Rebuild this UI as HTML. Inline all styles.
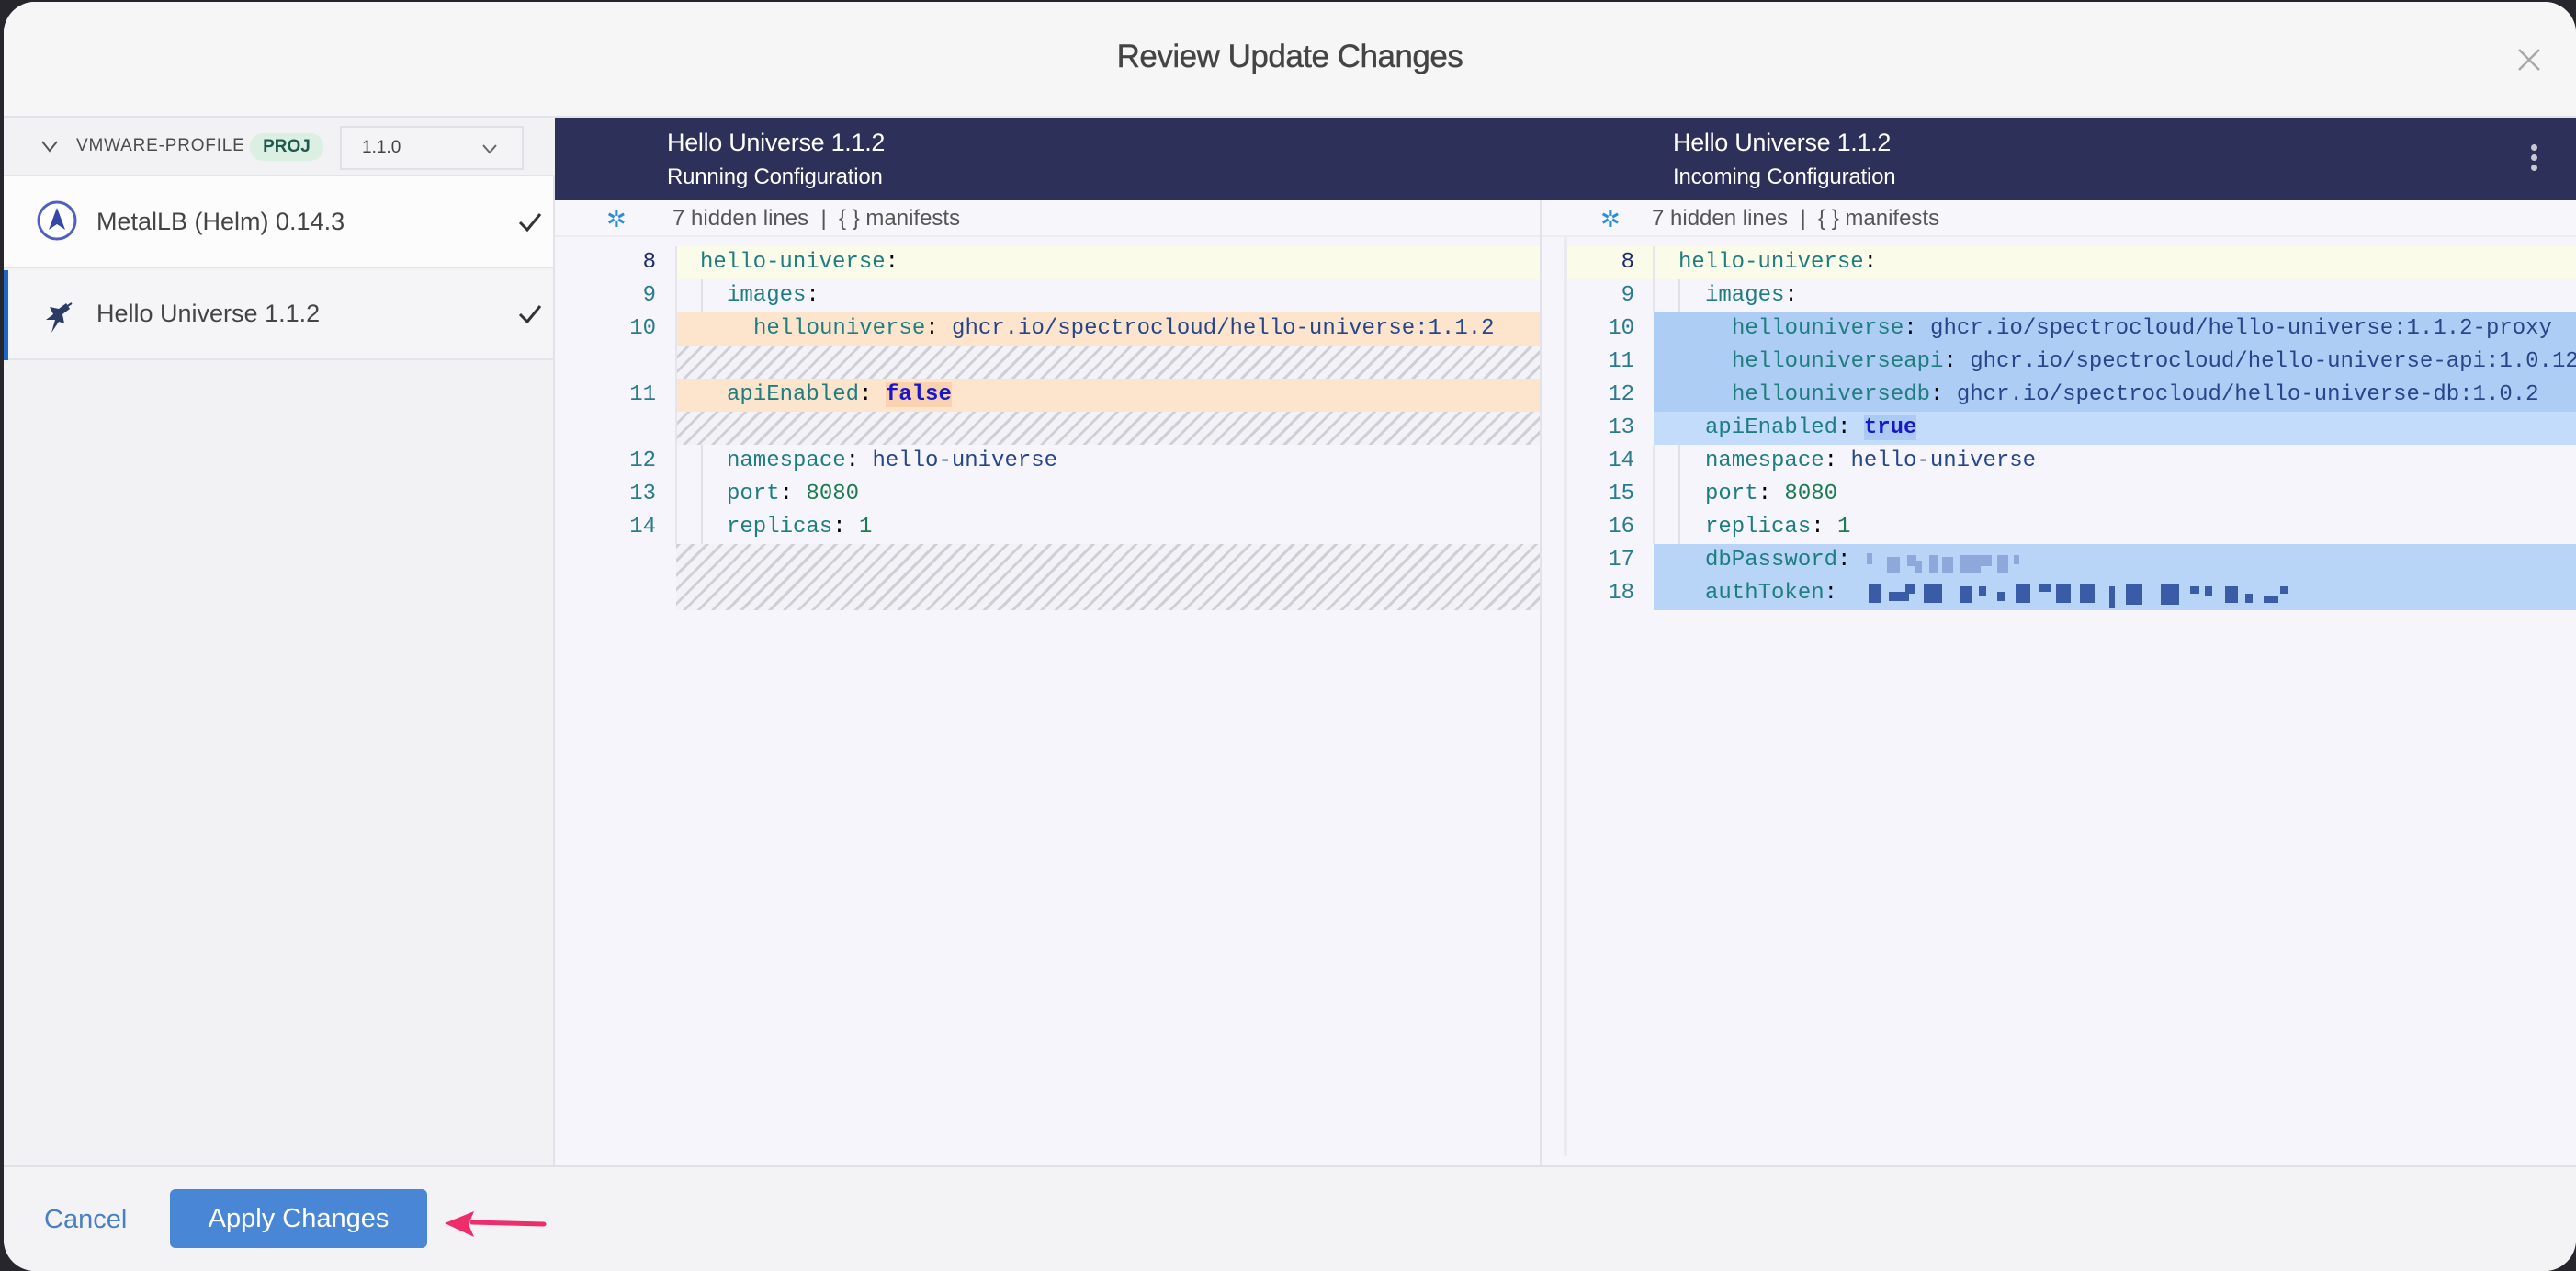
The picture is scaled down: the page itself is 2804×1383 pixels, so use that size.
<!DOCTYPE html>
<html><head><meta charset="utf-8"><style>
*{margin:0;padding:0;box-sizing:border-box}
body{width:2804px;height:1383px;background:#26262c;position:relative;overflow:hidden;font-family:"Liberation Sans",sans-serif}
.win{position:absolute;left:4px;top:2px;width:2800px;height:1381px;background:#f6f6f9;border-radius:34px 34px 34px 34px;overflow:hidden}
.a{position:absolute}
.mono{font-family:"Liberation Mono",monospace;font-size:24px;line-height:36px;white-space:pre}
.k{color:#1f7d80}.v{color:#27468a}.n{color:#1f7a52}.b{color:#1a17c9;font-weight:bold}
.ln{position:absolute;text-align:right;color:#2b7b8e;font-family:"Liberation Mono",monospace;font-size:24px;line-height:36px}
.hatch{background:repeating-linear-gradient(-45deg,#f3f2f7 0 8px,#cfcfd8 8px 11px)}
</style></head><body>
<div class="win">
<!-- header -->
<div class="a" style="left:0;top:0;width:2800px;height:126px;background:#f6f6f6;border-bottom:2px solid #e2e3ea"></div>
<div class="a" style="left:0;top:40px;width:2800px;text-align:center;font-size:35px;color:#444;letter-spacing:-0.5px;-webkit-text-stroke:0.4px #444">Review Update Changes</div>
<svg class="a" style="left:2736px;top:50px" width="26" height="26"><path d="M2 2L24 24M24 2L2 24" stroke="#a8a8a8" stroke-width="2.5"/></svg>

<!-- sidebar -->
<div class="a" style="left:0;top:126px;width:600px;height:1140px;background:#f2f2f5;border-right:2px solid #e2e2e8"></div>
<div class="a" style="left:0;top:126px;width:600px;height:64px;background:#f2f2f4;border-bottom:2px solid #e4e4ea"></div>
<svg class="a" style="left:40px;top:150px" width="20" height="14"><path d="M2 2L10 12L18 2" stroke="#555" stroke-width="2" fill="none"/></svg>
<div class="a" style="left:79px;top:146px;font-size:19px;color:#4c4c4c;letter-spacing:0.8px">VMWARE-PROFILE</div>
<div class="a" style="left:268px;top:143px;width:80px;height:30px;border-radius:14px;background:#dbf0e3;color:#1f5a4e;font-size:19px;font-weight:bold;text-align:center;line-height:30px">PROJ</div>
<div class="a" style="left:366px;top:135px;width:200px;height:48px;border:2px solid #e0e0e6;background:#f4f4f6"></div>
<div class="a" style="left:390px;top:148px;font-size:19px;color:#444">1.1.0</div>
<svg class="a" style="left:520px;top:154px" width="18" height="12"><path d="M2 2L9 10L16 2" stroke="#666" stroke-width="2" fill="none"/></svg>

<div class="a" style="left:0;top:190px;width:598px;height:100px;background:#fcfcfd;border-bottom:2px solid #e4e4ea"></div>
<svg class="a" style="left:34px;top:214px" width="48" height="52"><circle cx="24" cy="24" r="20" fill="#fff" stroke="#4f5fc4" stroke-width="3"/><path d="M24 10L33 34L24 28L15 34Z" fill="#3347a8"/></svg>
<div class="a" style="left:101px;top:224px;font-size:27px;color:#444">MetalLB (Helm) 0.14.3</div>
<svg class="a" style="left:559px;top:228px" width="28" height="24"><path d="M3 12L11 20L25 3" stroke="#333" stroke-width="3" fill="none"/></svg>

<div class="a" style="left:0;top:292px;width:598px;height:98px;background:#f5f5f8;border-bottom:2px solid #e4e4ea"></div>
<div class="a" style="left:0;top:292px;width:5px;height:98px;background:#1d67c9"></div>
<svg class="a" style="left:38px;top:324px" width="40" height="42"><path d="M30 4L22 10L12 8L16 16L8 22L18 22L14 36L22 24L28 26L26 16L34 10Z" fill="#2c3a66"/><path d="M24 12L36 4" stroke="#2c3a66" stroke-width="2"/></svg>
<div class="a" style="left:101px;top:324px;font-size:27px;color:#444">Hello Universe 1.1.2</div>
<svg class="a" style="left:559px;top:328px" width="28" height="24"><path d="M3 12L11 20L25 3" stroke="#333" stroke-width="3" fill="none"/></svg>

<!-- editor bg -->
<div class="a" style="left:600px;top:126px;width:2200px;height:1140px;background:#f6f5fb"></div>
<div class="a" style="left:600px;top:126px;width:2200px;height:90px;background:#2d3058"></div>
<div class="a" style="left:722px;top:138px;font-size:27px;color:#fff;letter-spacing:-0.3px">Hello Universe 1.1.2</div>
<div class="a" style="left:722px;top:177px;font-size:24px;color:#fff;letter-spacing:-0.2px">Running Configuration</div>
<div class="a" style="left:1817px;top:138px;font-size:27px;color:#fff;letter-spacing:-0.3px">Hello Universe 1.1.2</div>
<div class="a" style="left:1817px;top:177px;font-size:24px;color:#fff;letter-spacing:-0.2px">Incoming Configuration</div>
<div class="a" style="left:2751px;top:155px;width:7px;height:7px;border-radius:4px;background:#c8c8d0;box-shadow:0 11px 0 #c8c8d0,0 22px 0 #c8c8d0"></div>

<!-- hidden lines rows -->
<div class="a" style="left:600px;top:216px;width:2200px;height:40px;background:#f6f6fb;border-bottom:2px solid #ebebf0"></div>
<div class="a" style="left:656px;top:216px;font-size:26px;color:#2a8fd6;line-height:40px">✲</div>
<div class="a" style="left:728px;top:216px;font-size:24px;color:#555;line-height:40px">7 hidden lines &nbsp;|&nbsp; { } manifests</div>
<div class="a" style="left:1738px;top:216px;font-size:26px;color:#2a8fd6;line-height:40px">✲</div>
<div class="a" style="left:1794px;top:216px;font-size:24px;color:#555;line-height:40px">7 hidden lines &nbsp;|&nbsp; { } manifests</div>

<!-- divider -->
<div class="a" style="left:1672px;top:216px;width:3px;height:1050px;background:#e3e2ea"></div>
<div class="a" style="left:1698px;top:256px;width:4px;height:1000px;background:#ebeaf1"></div>

<!-- left code -->
<div class="a" style="left:732px;top:266px;width:940px;height:36px;background:#fbfbe9"></div>
<div class="a" style="left:732px;top:338px;width:940px;height:36px;background:#fde4cd"></div>
<div class="a hatch" style="left:732px;top:374px;width:940px;height:36px"></div>
<div class="a" style="left:732px;top:410px;width:940px;height:36px;background:#fde4cd"></div>
<div class="a hatch" style="left:732px;top:446px;width:940px;height:36px"></div>
<div class="a hatch" style="left:732px;top:590px;width:940px;height:72px"></div>
<div class="a" style="left:731px;top:266px;width:2px;height:324px;background:#e6e6ea"></div>
<div class="a" style="left:759px;top:302px;width:2px;height:36px;background:#e0e0e6"></div>
<div class="a" style="left:759px;top:482px;width:2px;height:108px;background:#e0e0e6"></div>
<div class="ln" style="left:660px;top:266px;width:50px;color:#1e2c6e">8</div>
<div class="ln" style="left:660px;top:302px;width:50px">9</div>
<div class="ln" style="left:660px;top:338px;width:50px">10</div>
<div class="ln" style="left:660px;top:410px;width:50px">11</div>
<div class="ln" style="left:660px;top:482px;width:50px">12</div>
<div class="ln" style="left:660px;top:518px;width:50px">13</div>
<div class="ln" style="left:660px;top:554px;width:50px">14</div>
<div class="a mono" style="left:758px;top:266px"><span class="k">hello-universe</span>:</div>
<div class="a mono" style="left:787px;top:302px"><span class="k">images</span>:</div>
<div class="a mono" style="left:816px;top:338px"><span class="k">hellouniverse</span>: <span class="v">ghcr.io/spectrocloud/hello-universe:1.1.2</span></div>
<div class="a mono" style="left:787px;top:410px"><span class="k">apiEnabled</span>: <span class="b" style="background:#fbd2b0">false</span></div>
<div class="a mono" style="left:787px;top:482px"><span class="k">namespace</span>: <span class="v">hello-universe</span></div>
<div class="a mono" style="left:787px;top:518px"><span class="k">port</span>: <span class="n">8080</span></div>
<div class="a mono" style="left:787px;top:554px"><span class="k">replicas</span>: <span class="n">1</span></div>

<!-- right code -->
<div class="a" style="left:1702px;top:266px;width:1098px;height:36px;background:#fbfbe9"></div>
<div class="a" style="left:1796px;top:338px;width:1004px;height:108px;background:#aecdf5"></div>
<div class="a" style="left:1796px;top:446px;width:1004px;height:36px;background:#c3dcfb"></div>
<div class="a" style="left:1796px;top:590px;width:1004px;height:72px;background:#b8d5f8"></div>
<div class="a" style="left:1795px;top:266px;width:2px;height:72px;background:#e6e6ea"></div>
<div class="a" style="left:1795px;top:482px;width:2px;height:108px;background:#e6e6ea"></div>
<div class="a" style="left:1823px;top:302px;width:2px;height:36px;background:#e0e0e6"></div>
<div class="a" style="left:1823px;top:482px;width:2px;height:108px;background:#e0e0e6"></div>
<div class="ln" style="left:1725px;top:266px;width:50px;color:#1e2c6e">8</div>
<div class="ln" style="left:1725px;top:302px;width:50px">9</div>
<div class="ln" style="left:1725px;top:338px;width:50px">10</div>
<div class="ln" style="left:1725px;top:374px;width:50px">11</div>
<div class="ln" style="left:1725px;top:410px;width:50px">12</div>
<div class="ln" style="left:1725px;top:446px;width:50px">13</div>
<div class="ln" style="left:1725px;top:482px;width:50px">14</div>
<div class="ln" style="left:1725px;top:518px;width:50px">15</div>
<div class="ln" style="left:1725px;top:554px;width:50px">16</div>
<div class="ln" style="left:1725px;top:590px;width:50px">17</div>
<div class="ln" style="left:1725px;top:626px;width:50px">18</div>
<div class="a mono" style="left:1823px;top:266px"><span class="k">hello-universe</span>:</div>
<div class="a mono" style="left:1852px;top:302px"><span class="k">images</span>:</div>
<div class="a mono" style="left:1881px;top:338px"><span class="k">hellouniverse</span>: <span class="v">ghcr.io/spectrocloud/hello-universe:1.1.2-proxy</span></div>
<div class="a mono" style="left:1881px;top:374px"><span class="k">hellouniverseapi</span>: <span class="v">ghcr.io/spectrocloud/hello-universe-api:1.0.12</span></div>
<div class="a mono" style="left:1881px;top:410px"><span class="k">hellouniversedb</span>: <span class="v">ghcr.io/spectrocloud/hello-universe-db:1.0.2</span></div>
<div class="a mono" style="left:1852px;top:446px"><span class="k">apiEnabled</span>: <span class="b" style="background:#abcaf3">true</span></div>
<div class="a mono" style="left:1852px;top:482px"><span class="k">namespace</span>: <span class="v">hello-universe</span></div>
<div class="a mono" style="left:1852px;top:518px"><span class="k">port</span>: <span class="n">8080</span></div>
<div class="a mono" style="left:1852px;top:554px"><span class="k">replicas</span>: <span class="n">1</span></div>
<div class="a mono" style="left:1852px;top:590px"><span class="k">dbPassword</span>:</div>
<div class="a mono" style="left:1852px;top:626px"><span class="k">authToken</span>:</div>
<!-- blurred secrets -->
<svg class="a" style="left:2020px;top:596px" width="700" height="66">
<g fill="#8fa8dc">
<rect x="8" y="4" width="6" height="12"/><rect x="30" y="8" width="14" height="18"/><rect x="52" y="6" width="10" height="12"/><rect x="60" y="12" width="8" height="14"/><rect x="76" y="6" width="10" height="20"/><rect x="90" y="8" width="12" height="18"/><rect x="110" y="6" width="22" height="20"/><rect x="130" y="6" width="14" height="12"/><rect x="150" y="6" width="12" height="20"/><rect x="168" y="6" width="6" height="10"/>
</g>
<g fill="#3a5ca6">
<rect x="10" y="38" width="14" height="20"/><rect x="32" y="46" width="22" height="10"/><rect x="50" y="38" width="10" height="10"/><rect x="70" y="38" width="20" height="20"/><rect x="110" y="40" width="12" height="18"/><rect x="130" y="40" width="8" height="10"/><rect x="150" y="46" width="8" height="10"/><rect x="170" y="38" width="16" height="20"/><rect x="196" y="38" width="12" height="8"/><rect x="214" y="38" width="16" height="20"/><rect x="240" y="38" width="16" height="20"/><rect x="272" y="40" width="6" height="24"/><rect x="290" y="38" width="18" height="22"/><rect x="328" y="38" width="20" height="22"/><rect x="360" y="40" width="10" height="8"/><rect x="376" y="40" width="8" height="10"/><rect x="398" y="40" width="14" height="18"/><rect x="420" y="48" width="8" height="10"/><rect x="440" y="50" width="16" height="8"/><rect x="458" y="40" width="8" height="8"/>
</g>
</svg>

<!-- footer -->
<div class="a" style="left:0;top:1266px;width:2800px;height:2px;background:#e0e0e6"></div>
<div class="a" style="left:0;top:1268px;width:2800px;height:113px;background:#f3f3f6"></div>
<div class="a" style="left:44px;top:1309px;font-size:29px;color:#4a7fc1">Cancel</div>
<div class="a" style="left:181px;top:1292px;width:280px;height:64px;border-radius:6px;background:#4a86d6;color:#fff;font-size:29px;text-align:center;line-height:64px">Apply Changes</div>
<svg class="a" style="left:470px;top:1312px" width="130" height="40"><path d="M118 18L40 16" stroke="#ee2d6a" stroke-width="5" stroke-linecap="round"/><path d="M10 17L42 4L36 18L42 32Z" fill="#ee2d6a"/></svg>
</div>
</body></html>
